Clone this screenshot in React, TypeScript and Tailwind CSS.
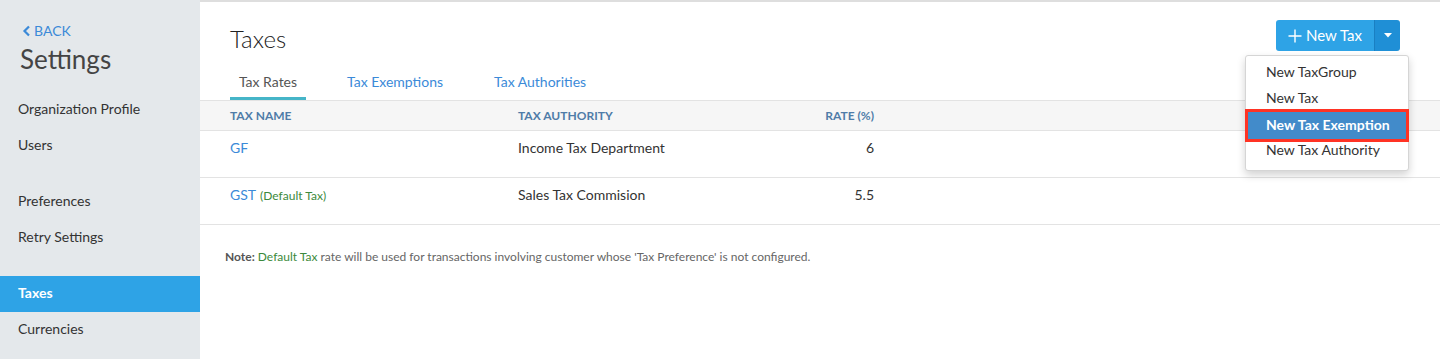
import React from "react";

const menu = [
  [{ label: "Organization Profile" }, { label: "Users" }],
  [{ label: "Preferences" }, { label: "Retry Settings" }],
  [{ label: "Taxes", active: true }, { label: "Currencies" }],
];

const rows = [
  { name: "GF", isDefault: false, authority: "Income Tax Department", rate: "6" },
  { name: "GST", isDefault: true, authority: "Sales Tax Commision", rate: "5.5" },
];

export default function App() {
  return (
    <div
      className="flex h-[359px] w-[1440px] overflow-hidden bg-white text-[#333]"
      style={{ fontFamily: "Lato, 'Open Sans', sans-serif" }}
    >
      {/* sidebar */}
      <aside className="flex w-[200px] shrink-0 flex-col bg-[#e4e8eb] pt-[22px]">
        <a className="ml-[22px] flex items-center gap-[3px] text-[14px] leading-[18px] text-[#3b8ad8]">
          <svg width="9" height="12" viewBox="0 0 9 12">
            <path d="M7 1.5L2.5 6L7 10.5" fill="none" stroke="#3b8ad8" strokeWidth="2.2" />
          </svg>
          BACK
        </a>
        <h1 className="ml-[20px] mt-[2px] text-[26px] leading-[34px] text-[#444]">Settings</h1>
        <nav className="mt-[16px] flex flex-col gap-[20px]">
          {menu.map((group, i) => (
            <div key={i} className="flex flex-col">
              {group.map((item) => (
                <div
                  key={item.label}
                  className={
                    item.active
                      ? "flex h-[36px] items-start bg-[#2ea3e6] pl-[18px] pt-[7px] text-[14px] leading-[20px] font-bold text-white"
                      : "flex h-[36px] items-start pl-[18px] pt-[7px] text-[14px] leading-[20px] text-[#333]"
                  }
                >
                  {item.label}
                </div>
              ))}
            </div>
          ))}
        </nav>
      </aside>

      {/* main */}
      <main className="relative flex-1 border-t-2 border-[#dedede]">
        <div className="flex items-start justify-between pl-[30px] pr-[40px]">
          <h2 className="mt-[23px] text-[24px] font-light leading-[28px] text-[#222]">Taxes</h2>
          <div className="relative mt-[18px] flex h-[31px] text-white">
            <button className="flex items-center gap-[4px] rounded-l-[3px] bg-[#2ea3e6] pl-[12px] pr-[12px] text-[15px]">
              <svg width="14" height="14" viewBox="0 0 14 14">
                <path d="M7 0.5V13.5M0.5 7H13.5" stroke="white" strokeWidth="1.4" />
              </svg>
              New Tax
            </button>
            <button className="flex w-[26px] items-center justify-center rounded-r-[3px] border-l border-[#1a7fc2] bg-[#1f8fd6]">
              <svg width="8" height="5" viewBox="0 0 8 5">
                <path d="M0 0H8L4 4.5Z" fill="white" />
              </svg>
            </button>

            <div className="absolute right-[-9px] top-[35px] z-10 w-[164px] rounded-[3px] border border-[#d5d5d5] bg-white pb-[8px] pt-[2px] shadow-[0_4px_8px_rgba(0,0,0,0.18)]">
              <div className="flex h-[26px] items-center pl-[20px] text-[14px] text-[#333]">New TaxGroup</div>
              <div className="flex h-[26px] items-center pl-[20px] text-[14px] text-[#333]">New Tax</div>
              <div className="-mx-[1px] -mb-[6px] -mt-[1px] flex h-[33px] items-center border-[3px] border-[#ff3324] bg-[#428bca] pb-[3px] pl-[18px] text-[14px] font-bold text-white">
                New Tax Exemption
              </div>
              <div className="flex h-[26px] items-center pl-[20px] text-[14px] text-[#333]">New Tax Authority</div>
            </div>
          </div>
        </div>

        {/* tabs */}
        <div className="mt-[16px] flex pl-[30px] text-[14px]">
          <div className="flex h-[31px] w-[76px] items-start justify-center border-b-[3px] border-[#45b5c8] pt-[2px] text-[#555]">
            Tax Rates
          </div>
          <div className="ml-[41px] pt-[2px] text-[#3b8ad8]">Tax Exemptions</div>
          <div className="ml-[51px] pt-[2px] text-[#3b8ad8]">Tax Authorities</div>
        </div>

        {/* table */}
        <div className="flex h-[31px] items-center border-y border-[#e3e3e3] bg-[#f6f6f6] pl-[30px] text-[12px] font-bold uppercase text-[#4f7ca8]">
          <div className="w-[288px]">Tax Name</div>
          <div className="w-[240px]">Tax Authority</div>
          <div className="w-[116px] text-right">Rate (%)</div>
        </div>
        {rows.map((r) => (
          <div key={r.name} className="flex h-[47px] items-start border-b border-[#e3e3e3] pl-[30px] pt-[7px] text-[14px] leading-[20px]">
            <div className="w-[288px]">
              <span className="text-[#3b8ad8]">{r.name}</span>
              {r.isDefault && <span className="ml-[4px] text-[12px] text-[#3c8a3c]">(Default Tax)</span>}
            </div>
            <div className="w-[240px] text-[#333]">{r.authority}</div>
            <div className="w-[116px] text-right text-[#333]">{r.rate}</div>
          </div>
        ))}

        <p className="mt-[23px] pl-[25px] text-[12px] text-[#666]">
          <span className="font-bold text-[#555]">Note:</span>{" "}
          <span className="text-[#3c8a3c]">Default Tax</span> rate will be used for transactions involving customer whose
          'Tax Preference' is not configured.
        </p>
      </main>
    </div>
  );
}
